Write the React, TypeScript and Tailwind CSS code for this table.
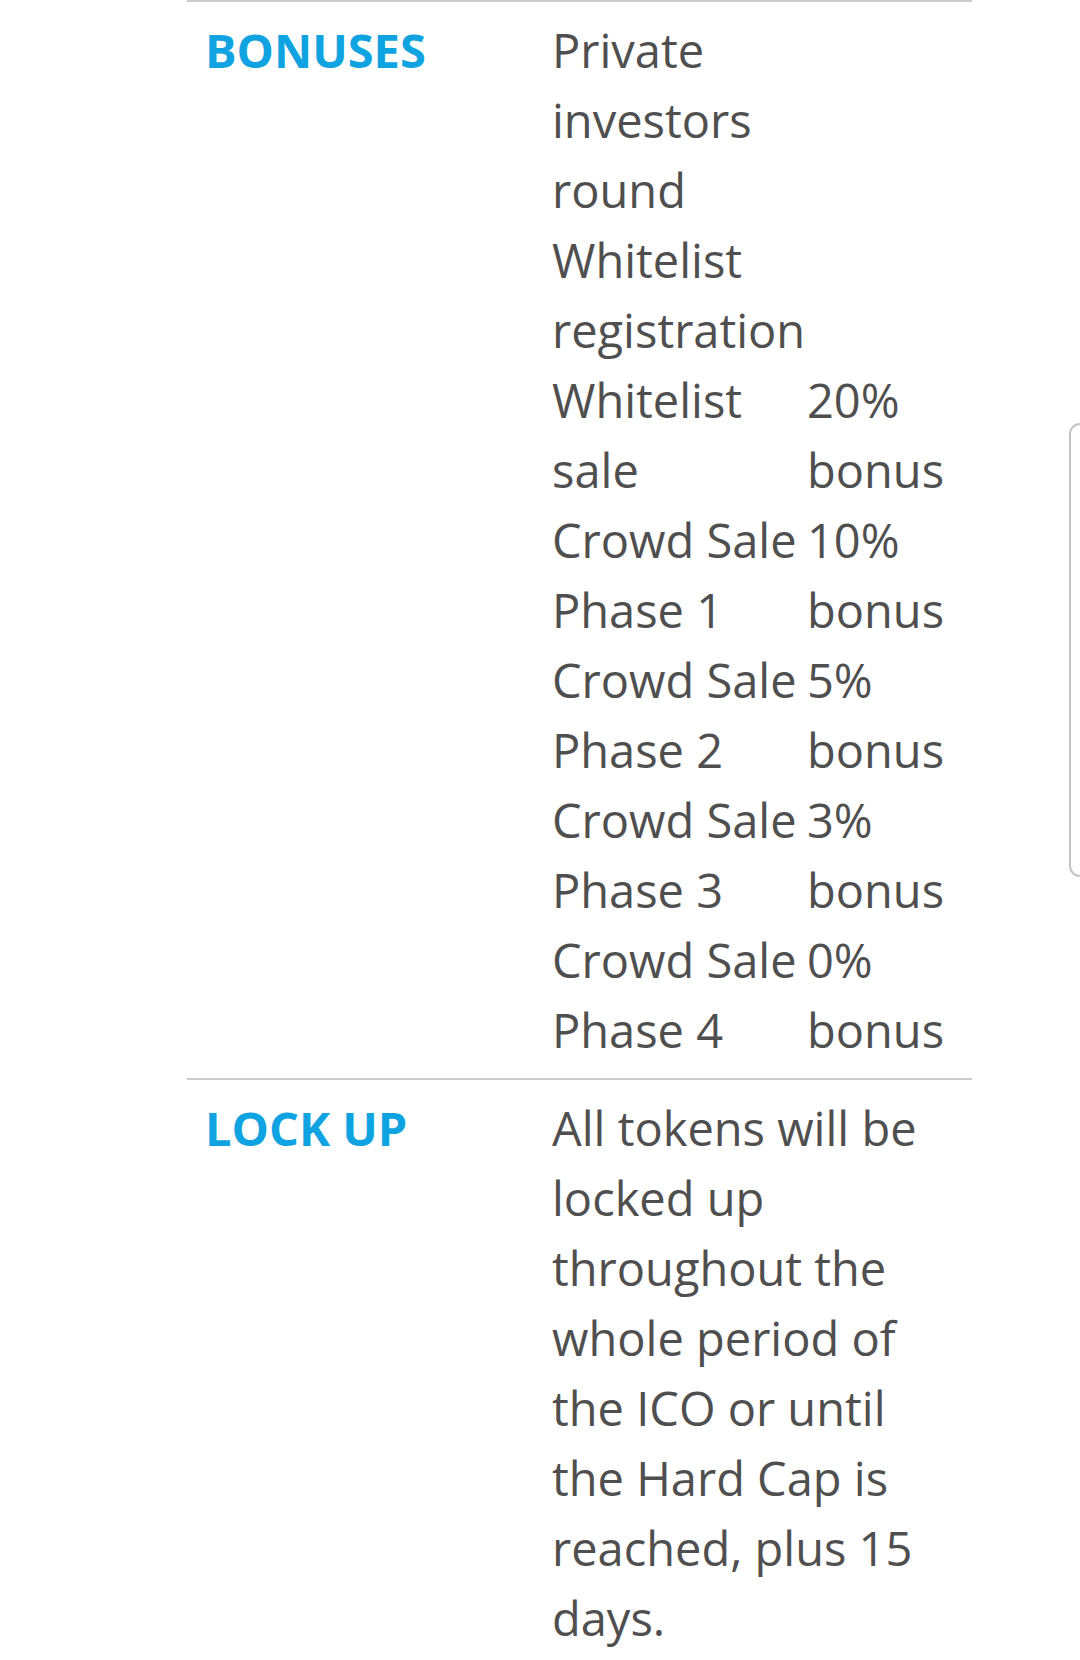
const bonuses = [
  { stage: "Private investors round", bonus: "" },
  { stage: "Whitelist registration", bonus: "" },
  { stage: "Whitelist sale", bonus: "20% bonus" },
  { stage: "Crowd Sale Phase 1", bonus: "10% bonus" },
  { stage: "Crowd Sale Phase 2", bonus: "5% bonus" },
  { stage: "Crowd Sale Phase 3", bonus: "3% bonus" },
  { stage: "Crowd Sale Phase 4", bonus: "0% bonus" },
];

function Row({ label, children }: { label: string; children: React.ReactNode }) {
  return (
    <div className="flex border-t-2 border-[#cbcbcb] pt-[13px] pb-[13px]">
      <div className="w-[365px] shrink-0 pl-[18px] font-bold text-[#0fa3e1]">{label}</div>
      <div className="w-[405px]">{children}</div>
    </div>
  );
}

export default function App() {
  return (
    <div className="relative min-h-[1660px] overflow-hidden bg-white font-['Open_Sans',sans-serif] text-[47px] leading-[70px] text-[#4f4f4f]">
      <div className="ml-[187px] w-[785px]">
        <Row label="BONUSES">
          <div className="grid grid-cols-[255px_150px]">
            {bonuses.map((b) => (
              <div key={b.stage} className="contents">
                <div>{b.stage}</div>
                <div>{b.bonus}</div>
              </div>
            ))}
          </div>
        </Row>
        <Row label="LOCK UP">
          <p>
            All tokens will be locked up throughout the whole period of the ICO or until the Hard Cap is reached,
            plus 15 days.
          </p>
        </Row>
      </div>

      {/* scroll handle on the right edge */}
      <div className="absolute right-0 top-[423px] h-[454px] w-[11px] rounded-l-[12px] border-2 border-r-0 border-[#c4c4c4]" />
    </div>
  );
}
